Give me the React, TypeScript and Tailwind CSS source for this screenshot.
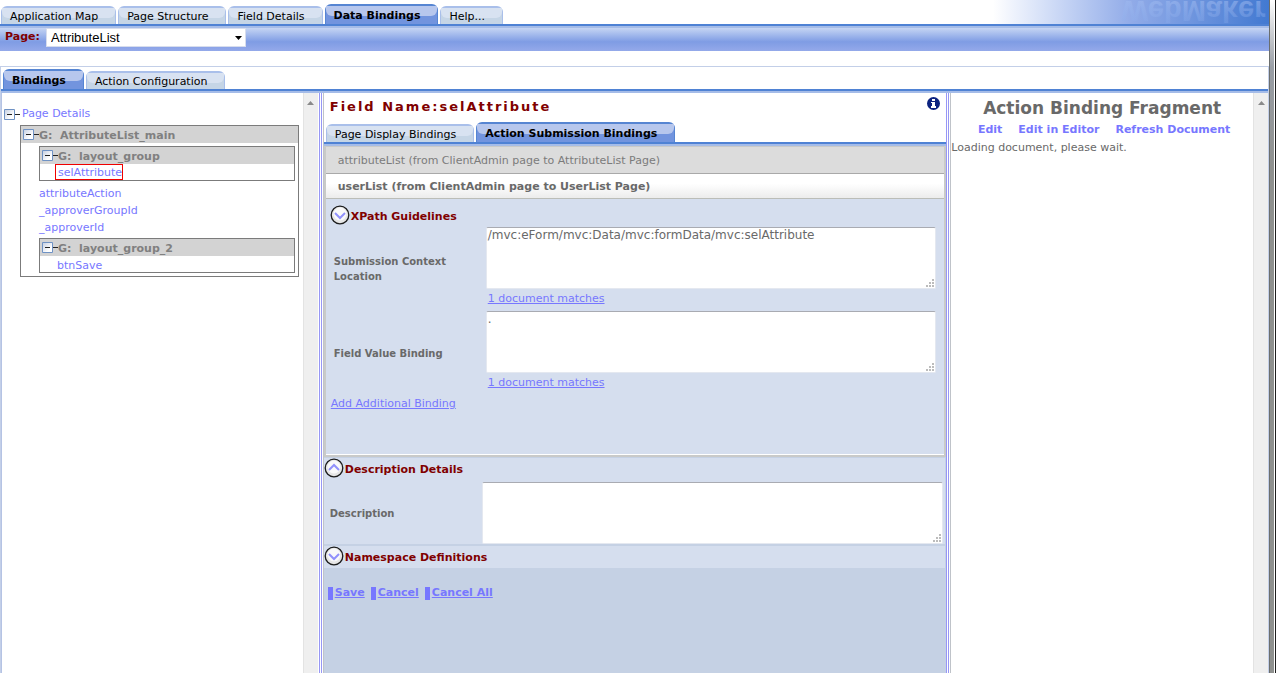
import React, { useState } from 'react';
import clsx from 'clsx';

type TabItem = { label: string; active?: boolean };

const MAIN_TABS: TabItem[] = [
  { label: 'Application Map' },
  { label: 'Page Structure' },
  { label: 'Field Details' },
  { label: 'Data Bindings', active: true },
  { label: 'Help...' },
];

const SUB_TABS: TabItem[] = [
  { label: 'Bindings', active: true },
  { label: 'Action Configuration' },
];

const FIELD_TABS: TabItem[] = [
  { label: 'Page Display Bindings' },
  { label: 'Action Submission Bindings', active: true },
];

const Tabs = ({ items, className }: { items: TabItem[]; className?: string }) => (
  <div role="tablist" className={clsx('flex items-end gap-0.5', className)}>
    {items.map(({ label, active }) => (
      <button
        key={label}
        role="tab"
        aria-selected={!!active}
        className={clsx(
          'relative rounded-t-md border-x border-t-2 pr-[17px] pl-2 text-[11px] whitespace-nowrap text-black',
          active
            ? 'h-5 border-[#5685d2] bg-[#7294de] font-bold'
            : 'h-[18px] border-[#a9bfea] bg-[#c5d5e6]'
        )}
      >
        <span
          className={clsx(
            'absolute inset-x-0 top-0 h-2.5 rounded-b-md',
            active ? 'bg-[#b7c7ed]' : 'bg-[#d8e2f1]'
          )}
        />
        <span className={clsx('relative block', active ? 'leading-5' : 'leading-[18px]')}>
          {label}
        </span>
      </button>
    ))}
  </div>
);

// Two-tone rule that sits under every row of tabs
const TabRule = () => (
  <div className="h-1 shrink-0 border-t-2 border-[#4f82d4] bg-[#a5bce8]" />
);

const ScrollTrack = () => (
  <div className="flex w-[15px] shrink-0 justify-center border-l border-[#e3e3e3] bg-[#efefef] pt-2">
    <svg width="7" height="4" viewBox="0 0 7 4">
      <path d="M3.5 0 7 4H0z" fill="#8a8a8a" />
    </svg>
  </div>
);

const Splitter = () => (
  <div className="flex shrink-0">
    <div className="w-[3px] border-x border-[#9797f5] bg-white" />
    <div className="ml-px w-px bg-[#bfc3c9]" />
  </div>
);

const Toggle = () => (
  <svg width="16" height="11" viewBox="0 0 16 11" className="shrink-0">
    <defs>
      <linearGradient id="toggleFill" x1="0" y1="0" x2="1" y2="1">
        <stop offset="0" stopColor="#c3cde0" />
        <stop offset="0.7" stopColor="#fff" />
      </linearGradient>
    </defs>
    <path d="M.5.5h10v10H.5z" fill="url(#toggleFill)" stroke="#6f92c4" />
    <path d="M3 5.5h5M11 5.5h5" stroke="#222" />
  </svg>
);

const CircleArrow = ({ up }: { up?: boolean }) => (
  <svg width="20" height="20" viewBox="0 0 20 20" className="shrink-0">
    <circle cx="10" cy="10" r="8.8" fill="#e6e6e6" stroke="#1c1c1c" strokeWidth="1.3" />
    <circle cx="10" cy="9" r="6.5" fill="#fafafa" />
    <path
      d={up ? 'M5 12l5-5 5 5' : 'M5 8l5 5 5-5'}
      fill="none"
      stroke="#9191fb"
      strokeWidth="2"
    />
  </svg>
);

const GroupTitle = ({ children }: { children: React.ReactNode }) => (
  <div className="flex h-[17px] items-center bg-[#d3d3d3] pl-0.5 font-bold whitespace-pre text-[#808080]">
    <Toggle />
    <span className="pt-0.5 leading-4">{children}</span>
  </div>
);

const SectionTitle = ({ up, children }: { up?: boolean; children: React.ReactNode }) => (
  <button className="flex items-center gap-px font-bold text-[#800000]">
    <CircleArrow up={up} />
    <span className="pt-1 leading-4">{children}</span>
  </button>
);

const Grip = () => (
  <svg
    width="8"
    height="8"
    viewBox="0 0 8 8"
    fill="#bcbcbc"
    className="pointer-events-none absolute right-0.5 bottom-0.5"
  >
    <path d="M6 0h2v2h-2zM3 3h2v2h-2zM6 3h2v2h-2zM0 6h2v2h-2zM3 6h2v2h-2zM6 6h2v2h-2z" />
  </svg>
);

const TextArea = ({ id, value = '' }: { id: string; value?: string }) => (
  <div className="relative">
    <textarea
      id={id}
      defaultValue={value}
      className="block h-[62px] w-full resize-none rounded-xs border border-[#e4e8f0] border-t-[#a9abb2] bg-white px-px text-xs leading-[14px] text-[#696969] outline-none"
    />
    <Grip />
  </div>
);

const LINK = 'text-[#7777ff] underline';

const TREE_FIELDS = ['attributeAction', '_approverGroupId', '_approverId'];

const FieldTree = () => (
  <nav className="min-w-0 flex-1 pt-3 pr-1 pl-0.5 text-[11px]">
    <div className="flex h-[18px] items-center gap-0.5">
      <Toggle />
      <a href="#details" className="pt-px text-[#7777ff]">Page Details</a>
    </div>
    <div className="mt-0.5 ml-4 border border-[#7b7b7b]">
      <GroupTitle>G:  AttributeList_main</GroupTitle>
      <div className="pt-[3px] pr-[3px] pb-[3px] pl-[18px]">
        <div className="border border-[#7b7b7b]">
          <GroupTitle>G:  layout_group</GroupTitle>
          <div className="flex pl-[15px]">
            <a
              href="#selAttribute"
              className="border border-[#f00000] pt-px pl-0.5 leading-[13px] text-[#7777ff]"
            >
              selAttribute
            </a>
          </div>
        </div>
        <ul className="py-[3px]">
          {TREE_FIELDS.map((name) => (
            <li key={name} className="h-[17px] leading-5">
              <a href={`#${name}`} className="text-[#7777ff]">{name}</a>
            </li>
          ))}
        </ul>
        <div className="border border-[#7b7b7b]">
          <GroupTitle>G:  layout_group_2</GroupTitle>
          <a href="#btnSave" className="block h-4 pl-[17px] leading-5 text-[#7777ff]">btnSave</a>
        </div>
      </div>
    </div>
  </nav>
);

const BindingEditor = () => (
  <section className="flex min-w-0 flex-1 flex-col bg-[#c5d1e4] text-[11px]">
    <div className="bg-white">
      <div className="flex h-[29px] items-center justify-between pr-1.5 pl-1.5">
        <h1 className="pb-0.5 text-[13px] leading-4 font-bold tracking-[2px] text-[#800000]">
          Field Name:selAttribute
        </h1>
        <button aria-label="Information" className="pb-2">
          <svg width="13" height="13" viewBox="0 0 13 13">
            <circle cx="6.5" cy="6.5" r="6.5" fill="#0c2380" />
            <path d="M5 2h3v2H5zM4 5h4v4h1v2H4V9h1V6H4z" fill="#fff" />
          </svg>
        </button>
      </div>
      <Tabs items={FIELD_TABS} className="pl-0.5" />
    </div>
    <TabRule />

    <div className="border-x-2 border-t border-b-2 border-[#c9cac9] bg-[#d5deee]">
      <button className="block h-[27px] w-full border-b border-[#a9a9a9] bg-[#dcdcdc] pl-3 text-left leading-7 text-[#7b7b7b]">
        attributeList (from ClientAdmin page to AttributeList Page)
      </button>
      <button className="block h-[25px] w-full border-b border-[#bbbdb8] bg-linear-to-b from-white from-40% to-[#ececec] pl-3 text-left leading-[26px] font-bold text-[#696969]">
        userList (from ClientAdmin page to UserList Page)
      </button>
      <div className="h-64 border-b border-white pt-1.5 pr-2 pl-1">
        <SectionTitle>XPath Guidelines</SectionTitle>
        <div className="mt-0.5 grid grid-cols-[152px_1fr] pl-1">
          <label
            htmlFor="context"
            className="self-center pr-8 text-[10px] leading-[15px] font-bold text-[#696969]"
          >
            Submission Context Location
          </label>
          <div className="h-[84px]">
            <TextArea id="context" value="/mvc:eForm/mvc:Data/mvc:formData/mvc:selAttribute" />
            <a href="#context-matches" className={clsx('ml-0.5 leading-5', LINK)}>
              1 document matches
            </a>
          </div>
          <label htmlFor="binding" className="self-center text-[10px] font-bold text-[#696969]">
            Field Value Binding
          </label>
          <div className="h-[84px]">
            <TextArea id="binding" value="." />
            <a href="#binding-matches" className={clsx('ml-0.5 leading-5', LINK)}>
              1 document matches
            </a>
          </div>
        </div>
        <a href="#add" className={clsx('ml-px leading-[18px]', LINK)}>Add Additional Binding</a>
      </div>
    </div>

    <div className="mt-px mr-px bg-[#d5deee] pr-0.5">
      <SectionTitle up>Description Details</SectionTitle>
      <div className="mt-1 grid grid-cols-[152px_1fr] pl-1.5">
        <label htmlFor="description" className="self-center text-[10px] font-bold text-[#696969]">
          Description
        </label>
        <TextArea id="description" />
      </div>
    </div>
    <div className="mt-0.5 mr-px h-[22px] bg-[#d5deee]">
      <SectionTitle>Namespace Definitions</SectionTitle>
    </div>

    <div className="flex gap-1.5 pt-[18px] pl-1 font-bold">
      {['Save', 'Cancel', 'Cancel All'].map((action) => (
        <button key={action} className="flex items-center gap-0.5 leading-[14px] text-[#7777ff] underline">
          <span className="h-[13px] w-[5px] bg-[#7777ff]" />
          {action}
        </button>
      ))}
    </div>
  </section>
);

const Fragment = () => (
  <section className="min-w-0 flex-1 pt-1 text-[11px] text-[#696969]">
    <h2 className="text-center text-[17px] leading-[22px] font-bold">Action Binding Fragment</h2>
    <div className="flex h-[22px] items-center justify-center gap-4 pl-1 font-bold text-[#7777ff]">
      <a href="#edit">Edit</a>
      <a href="#editor">Edit in Editor</a>
      <a href="#refresh">Refresh Document</a>
    </div>
    <p className="leading-[13px]">Loading document, please wait.</p>
  </section>
);

const App = () => {
  const [page, setPage] = useState('AttributeList');

  return (
    <div className="flex min-h-screen bg-white font-['DejaVu_Sans',Verdana,sans-serif]">
      <div className="flex min-w-0 flex-1 flex-col">
        <header>
          <div className="flex h-6 items-end justify-between">
            <Tabs items={MAIN_TABS} className="pl-px" />
            <div className="h-6 w-[276px] bg-linear-to-r from-white via-[#91abe8] via-50% to-[#4279d1]">
              <svg width="276" height="24" viewBox="0 0 276 24" role="img" aria-label="WebMaker">
                <defs>
                  <linearGradient id="logoFade" x1="0" y1="0" x2="0" y2="1">
                    <stop offset="0.2" stopColor="#8fb0ee" stopOpacity="0.3" />
                    <stop offset="1" stopColor="#a4bdf0" stopOpacity="0.6" />
                  </linearGradient>
                </defs>
                <text
                  x="128"
                  y="-1"
                  transform="scale(1 -1)"
                  fontFamily="Liberation Sans, Arial, sans-serif"
                  fontWeight="bold"
                  fontSize="29"
                  fill="url(#logoFade)"
                >
                  WebMaker
                </text>
              </svg>
            </div>
          </div>
          <TabRule />
          <div className="flex h-[23px] items-start bg-linear-to-b from-[#c6d5f3] via-[#7f9ce4] via-60% to-[#94a9ea] pl-[5px]">
            <label htmlFor="page" className="w-[41px] text-[11px] leading-[18px] font-bold text-[#800000]">
              Page:
            </label>
            <div className="relative">
              <select
                id="page"
                value={page}
                onChange={(e) => setPage(e.target.value)}
                className="block h-[19px] w-[200px] appearance-none border border-[#d7dded] bg-white pl-1 font-['Liberation_Sans',Arial,sans-serif] text-[13px] leading-4 text-black"
              >
                <option>AttributeList</option>
              </select>
              <svg
                width="7"
                height="4"
                viewBox="0 0 7 4"
                className="pointer-events-none absolute top-2 right-1"
              >
                <path d="M0 0h7L3.5 4z" fill="#000" />
              </svg>
            </div>
          </div>
        </header>

        <main className="mt-[15px] flex flex-1 flex-col border-x border-t border-[#c3cfe8]">
          <Tabs items={SUB_TABS} className="mt-0.5 pl-0.5" />
          <TabRule />
          <div className="flex flex-1">
            <div className="mr-px flex w-1/4 border-l border-[#b5c3e4]">
              <FieldTree />
              <ScrollTrack />
            </div>
            <Splitter />
            <BindingEditor />
            <Splitter />
            <div className="flex w-1/4">
              <Fragment />
              <ScrollTrack />
            </div>
          </div>
        </main>
      </div>
      <div className="w-[7px] shrink-0 border-r border-l border-r-[#1f1f1f] border-l-[#6b6e6e] bg-white pr-px">
        <div className="h-full bg-linear-to-b from-white via-[#9a9fa6] via-10% to-[#8f918f] to-25%" />
      </div>
    </div>
  );
};

export default App;
